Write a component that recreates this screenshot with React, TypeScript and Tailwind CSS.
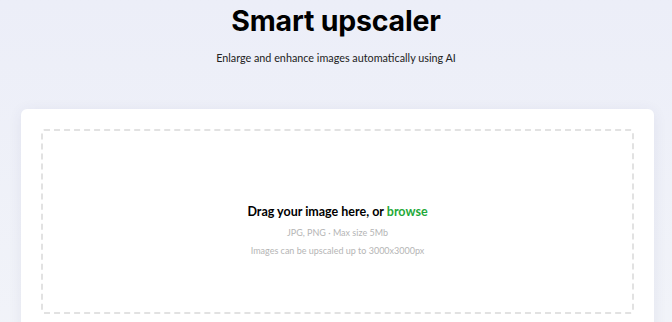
export default function App() {
  return (
    <div
      className="min-h-[322px] bg-gradient-to-b from-[#eceef8] to-[#f2f4f9] pb-10"
      style={{ fontFamily: "Lato, 'Noto Sans', sans-serif" }}
    >
      <header className="flex flex-col items-center pt-[3px]">
        <h1 className="font-['Inter',sans-serif] text-[28.5px] font-bold leading-[36px] tracking-[-0.2px] text-black">
          Smart upscaler
        </h1>
        <p className="mt-[11px] text-[10.8px] leading-[16px] text-[#222]">
          Enlarge and enhance images automatically using AI
        </p>
      </header>

      <section className="ml-[21px] mr-[18px] mt-[43px] rounded-md bg-white p-5 shadow-[0_2px_14px_rgba(60,70,110,0.08)]">
        <div className="flex h-[185px] flex-col items-center justify-center rounded-[3px] border-2 border-dashed border-[#e2e2e2] pt-[18px]">
          <p className="text-[12.5px] font-bold leading-[16px] text-black">
            Drag your image here, or{" "}
            <span className="text-[#1fa93a]">browse</span>
          </p>
          <p className="mt-[6px] text-[9px] leading-[13px] text-[#b5b5b5]">
            JPG, PNG · Max size 5Mb
          </p>
          <p className="mt-[5px] text-[9px] leading-[13px] text-[#b5b5b5]">
            Images can be upscaled up to 3000x3000px
          </p>
        </div>
      </section>
    </div>
  );
}
